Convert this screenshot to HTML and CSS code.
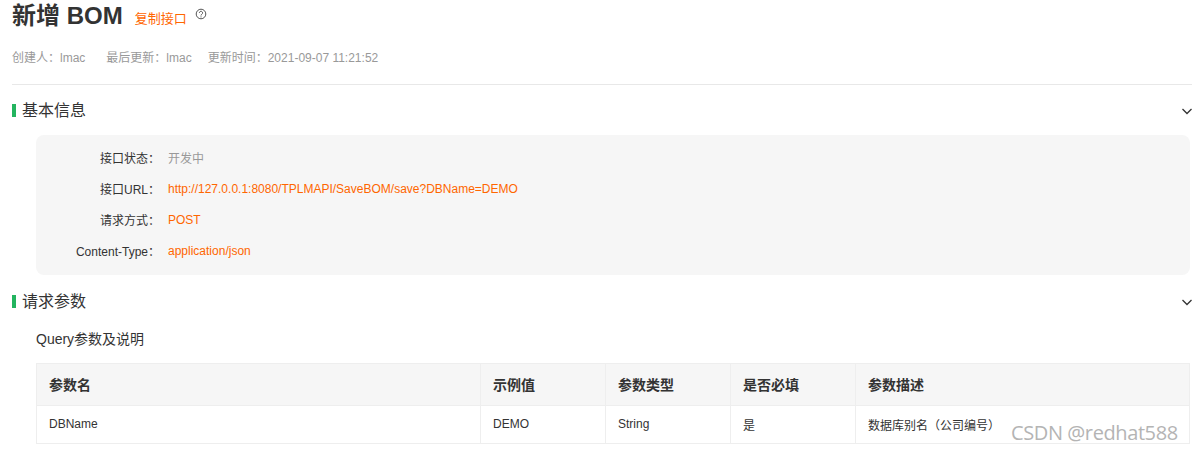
FILE: index.html
```html
<!DOCTYPE html>
<html lang="zh-CN">
<head>
<meta charset="utf-8">
<title>新增 BOM</title>
<link rel="stylesheet" href="styles.css">
</head>
<body>
<main class="page">
  <header class="head">
    <div class="title-row">
      <h1 class="title">新增 BOM</h1>
      <a class="copy">复制接口</a>
      <svg class="help" width="12" height="12" viewBox="0 0 12 12" fill="none" stroke="#555" aria-hidden="true">
        <circle cx="6" cy="6" r="4.8" stroke-width="1"/>
        <path d="M4.4 4.9a1.6 1.6 0 1 1 2.5 1.3c-.6.4-.9.7-.9 1.3" stroke-width="1"/>
        <path d="M6 8.4v1" stroke-width="1"/>
      </svg>
    </div>
    <div class="meta">
      <span class="meta-a">创建人：lmac</span>
      <span>最后更新：lmac</span>
      <span>更新时间：2021-09-07 11:21:52</span>
    </div>
  </header>

  <section class="section first">
    <div class="sec-head">
      <h2 class="sec-title">基本信息</h2>
      <svg class="chev" width="10" height="7" viewBox="0 0 10 7" fill="none" stroke="#333" stroke-width="1.3" aria-hidden="true"><path d="M.5 1l4.5 4.500L9.500 1"/></svg>
    </div>
    <div class="panel">
      <div class="row"><span class="key">接口状态：</span><span class="val muted">开发中</span></div>
      <div class="row"><span class="key">接口URL：</span><span class="val">http://127.0.0.1:8080/TPLMAPI/SaveBOM/save?DBName=DEMO</span></div>
      <div class="row"><span class="key">请求方式：</span><span class="val">POST</span></div>
      <div class="row"><span class="key">Content-Type：</span><span class="val">application/json</span></div>
    </div>
  </section>

  <section class="section">
    <div class="sec-head">
      <h2 class="sec-title">请求参数</h2>
      <svg class="chev" width="10" height="7" viewBox="0 0 10 7" fill="none" stroke="#333" stroke-width="1.3" aria-hidden="true"><path d="M.5 1l4.5 4.500L9.500 1"/></svg>
    </div>
    <div class="sub">Query参数及说明</div>
    <table class="params">
      <colgroup>
        <col class="c1"><col class="c2"><col class="c3"><col class="c4"><col class="c5">
      </colgroup>
      <thead>
        <tr><th>参数名</th><th>示例值</th><th>参数类型</th><th>是否必填</th><th>参数描述</th></tr>
      </thead>
      <tbody>
        <tr><td>DBName</td><td>DEMO</td><td>String</td><td>是</td><td>数据库别名（公司编号）</td></tr>
      </tbody>
    </table>
  </section>
</main>
<div class="mark">CSDN @redhat588</div>
</body>
</html>
```
FILE: styles.css
```css
* { box-sizing: border-box; }
html, body { margin: 0; height: 451px; overflow: hidden; }
body {
  background: #fff;
  color: #333;
  font-family: "Liberation Sans", "Noto Sans CJK SC", sans-serif;
  font-size: 12px;
  position: relative;
}
.page { padding-left: 12px; padding-right: 2px; }
.head { border-bottom: 1px solid #e8e8e8; height: 85px; margin-right: -2px; }
.title-row { display: flex; align-items: flex-start; height: 50px; }
.title { margin: 0; font-size: 24px; line-height: 32px; font-weight: 700; color: #333; }
.copy { margin-left: 12px; margin-top: 10px; font-size: 13px; line-height: 18px; color: #f60; }
.help { margin-left: 8px; margin-top: 8px; }
.meta { display: flex; gap: 16px; color: #999; line-height: 16px; }
.meta-a { margin-right: 5px; }
.sec-head { display: flex; justify-content: space-between; align-items: center; height: 50px; }
.sec-title {
  margin: 0;
  padding-left: 6px;
  border-left: 4px solid #23b45f;
  font-size: 16px;
  font-weight: 400;
  line-height: 13px;
  color: #333;
}
.chev { margin-right: -2px; margin-top: 2px; }
.panel { margin-left: 24px; background: #f6f6f6; border-radius: 8px; padding: 7px 0 9px; }
.row { display: flex; height: 31px; align-items: center; }
.key { width: 124px; margin-right: 8px; text-align: right; color: #333; }
.val { color: #f60; }
.muted { color: #999; }
.section + .section { margin-top: 1px; }
.sub { margin: 0 0 0 24px; font-size: 14px; line-height: 26px; height: 26px; color: #333; }
.params {
  margin: 11px 0 0 24px;
  width: 1154px;
  border-collapse: collapse;
  table-layout: fixed;
  border: 1px solid #eee;
}
.c1 { width: 444px; }
.c2, .c3, .c4 { width: 125px; }
.params th, .params td { border: 1px solid #eee; padding: 0 12px; text-align: left; }
.params th { height: 42px; padding-bottom: 2px; background: #f6f6f6; font-size: 14px; font-weight: 700; color: #333; }
.params td { height: 38px; padding-bottom: 1px; font-size: 12px; color: #333; }
.mark {
  position: absolute;
  left: 1011px;
  top: 419px;
  font-family: "Open Sans", sans-serif;
  font-size: 20px;
  line-height: 28px;
  letter-spacing: -0.4px;
  color: #b4b4b4;
  white-space: nowrap;
}
```
